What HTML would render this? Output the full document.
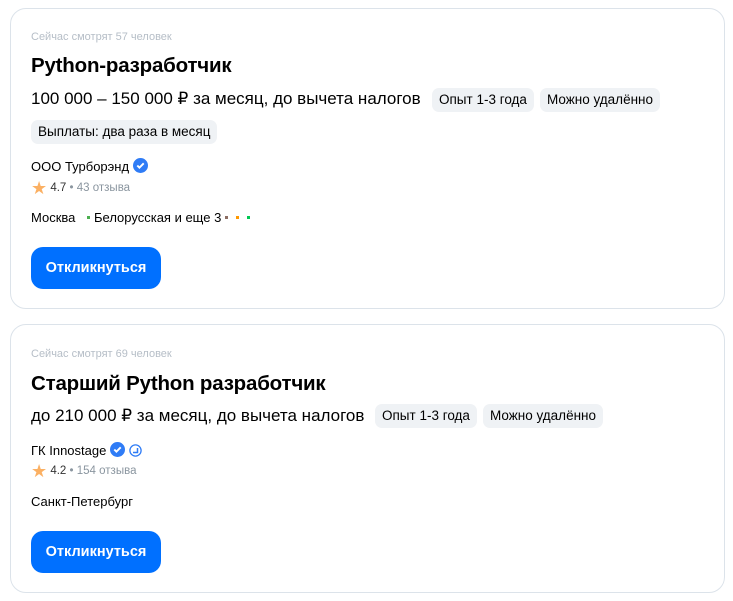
<!DOCTYPE html><html><head><meta charset="utf-8"><style>
body{margin:0;background:#fff;font-family:"Liberation Sans",sans-serif;color:#000;width:733px;height:601px;position:relative;overflow:hidden}
.card{position:absolute;left:10px;width:715px;border:1px solid #dce3ea;border-radius:16px;box-sizing:border-box}
.a{position:absolute;left:20px;white-space:nowrap}
.s{font-size:11px;color:#b6bec7}
.t{font-size:20.5px;font-weight:bold;letter-spacing:-.2px}
.p{font-size:17px}
.tag{position:absolute;height:24px;line-height:24px;padding:0 7px;background:#eff2f5;border-radius:7px;font-size:13.5px;white-space:nowrap}
.c{font-size:13px}
.r{font-size:11.5px;color:#8a959f}
.r b{color:#333;font-weight:normal}
.btn{position:absolute;left:20px;width:130px;height:42px;background:#0070ff;border-radius:12px;color:#fff;font-weight:bold;font-size:14.5px;text-align:center;line-height:42px}
.d{display:inline-block;width:3px;height:3px;margin:0 4px 3px}
</style></head><body>
<div class="card" style="top:8px;height:301px">
<div class="a s" style="top:22px">Сейчас смотрят 57 человек</div>
<div class="a t" style="top:45px">Python-разработчик</div>
<div class="a p" style="top:80px">100 000 – 150 000 ₽ за месяц, до вычета налогов</div>
<div class="tag" style="left:421px;top:79px">Опыт 1-3 года</div>
<div class="tag" style="left:529px;top:79px">Можно удалённо</div>
<div class="tag" style="left:20px;top:111px">Выплаты: два раза в месяц</div>
<div class="a c" style="top:149px">ООО Турборэнд <svg width="15" height="15" viewBox="0 0 14 14" style="vertical-align:-2px"><circle cx="7" cy="7" r="7" fill="#2f7cf6"/><path d="M4 7l2 2 4-4" stroke="#fff" stroke-width="1.8" fill="none"/></svg></div>
<div class="a r" style="top:169px"><span style="color:#fbb063;font-size:18px;vertical-align:-3px">★</span> <b>4.7</b> • 43 отзыва</div>
<div class="a c" style="top:201px">Москва <span class="d" style="background:#4caf50;margin-left:8px"></span>Белорусская и еще 3<span class="d" style="background:#8d6e63"></span><span class="d" style="background:#ff9800"></span><span class="d" style="background:#00c853"></span></div>
<div class="btn" style="top:238px">Откликнуться</div>
</div>
<div class="card" style="top:324px;height:269px">
<div class="a s" style="top:23px">Сейчас смотрят 69 человек</div>
<div class="a t" style="top:47px">Старший Python разработчик</div>
<div class="a p" style="top:81px">до 210 000 ₽ за месяц, до вычета налогов</div>
<div class="tag" style="left:364px;top:79px">Опыт 1-3 года</div>
<div class="tag" style="left:472px;top:79px">Можно удалённо</div>
<div class="a c" style="top:117px">ГК Innostage <svg width="15" height="15" viewBox="0 0 14 14" style="vertical-align:-2px"><circle cx="7" cy="7" r="7" fill="#2f7cf6"/><path d="M4 7l2 2 4-4" stroke="#fff" stroke-width="1.8" fill="none"/></svg> <svg width="13" height="13" viewBox="0 0 13 13" style="vertical-align:-2px"><circle cx="6.5" cy="6.5" r="5.6" stroke="#2f7cf6" stroke-width="1.3" fill="none"/><path d="M4 8.5h4.5V4" stroke="#2f7cf6" stroke-width="1.5" fill="none"/></svg></div>
<div class="a r" style="top:136px"><span style="color:#fbb063;font-size:18px;vertical-align:-3px">★</span> <b>4.2</b> • 154 отзыва</div>
<div class="a c" style="top:169px">Санкт-Петербург</div>
<div class="btn" style="top:206px">Откликнуться</div>
</div>
</body></html>
